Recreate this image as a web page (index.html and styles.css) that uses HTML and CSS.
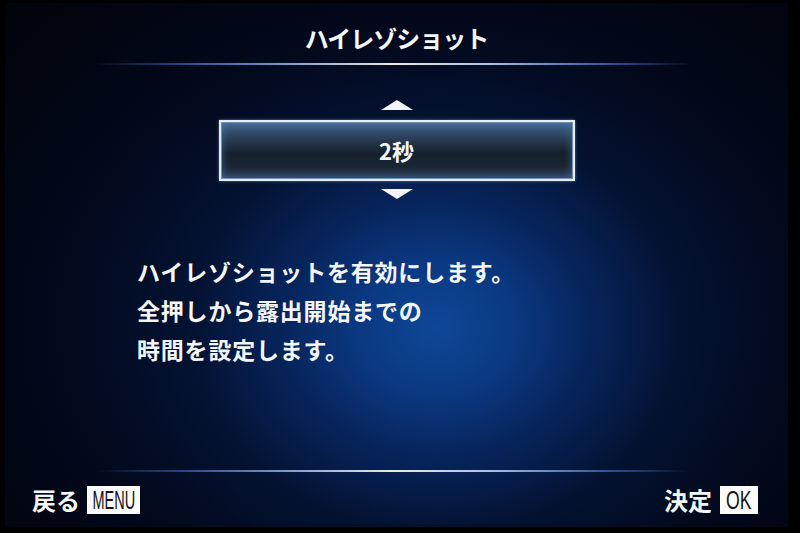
FILE: index.html
```html
<!DOCTYPE html>
<html lang="ja">
<head>
    <meta charset="UTF-8">
    <meta name="viewport" content="width=device-width, initial-scale=1.0">
    <title>ハイレゾショット</title>
    <link rel="stylesheet" href="styles.css">
</head>
<body>
    <div class="screen">
        <div class="title">ハイレゾショット</div>
        <div class="rule"></div>

        <div class="main">
            <div class="picker">
                <div class="arrow arrow-up"></div>
                <div class="value-box">2秒</div>
                <div class="arrow arrow-down"></div>
            </div>

            <div class="desc">
                <p>ハイレゾショットを有効にします。</p>
                <p>全押しから露出開始までの</p>
                <p>時間を設定します。</p>
            </div>
        </div>

        <div class="rule rule-bottom"></div>
        <div class="footer">
            <div class="hint">戻る<span class="key key-menu"><span class="narrow">MENU</span></span></div>
            <div class="hint">決定<span class="key key-ok"><span class="narrow">OK</span></span></div>
        </div>
    </div>
</body>
</html>
```

FILE: styles.css
```css
body {
    margin: 0;
    padding: 0;
    width: 800px;
    height: 533px;
    background-color: #000;
    font-family: "Noto Sans CJK JP", "Noto Sans", sans-serif;
    color: #f4f6f8;
    overflow: hidden;
}

/* the LCD panel itself, inside a black bezel */
.screen {
    margin: 3px 0 0 5px;
    width: 783px;
    height: 524px;
    display: flex;
    flex-direction: column;
    box-sizing: border-box;
    padding-bottom: 13px;
    overflow: hidden;
    background:
        radial-gradient(ellipse 310px 260px at 432px 325px, #0e4798 0%, #0b3982 25%, rgba(7, 40, 100, 0.78) 50%, rgba(4, 22, 56, 0.35) 78%, rgba(3, 10, 28, 0) 100%),
        radial-gradient(ellipse 560px 440px at 425px 320px, #061c46 0%, #041232 40%, #02081a 70%, #02040c 100%);
}

.title {
    padding-top: 21px;
    height: 28px;
    line-height: 28px;
    font-size: 24px;
    font-weight: 700;
    text-align: center;
    letter-spacing: -1px;
}

/* thin glowing divider under the title and above the footer */
.rule {
    height: 2px;
    margin: 11px 96px 0 89px;
    background: linear-gradient(to right,
        rgba(30, 70, 150, 0) 0%,
        #1f4688 14%,
        #7a9cd0 32%,
        #f2e8de 50%,
        #a9c2e8 66%,
        #2a55a0 86%,
        rgba(30, 70, 150, 0) 100%);
}

.rule-bottom {
    margin: 0 98px 0 91px;
}

.main {
    flex: 1;
}

.picker {
    display: flex;
    flex-direction: column;
    align-items: center;
    padding-top: 35px;
}

.arrow {
    width: 0;
    height: 0;
    border-left: 16px solid transparent;
    border-right: 16px solid transparent;
}

.arrow-up {
    border-bottom: 10px solid #f2f4f6;
}

.arrow-down {
    border-top: 10px solid #f2f4f6;
    margin-top: 8px;
}

.value-box {
    margin-top: 10px;
    width: 352px;
    height: 57px;
    border: 2px solid #e6edf4;
    box-shadow:
        0 0 3px rgba(140, 180, 230, 0.6),
        inset 0 0 0 1px #6d8fb8,
        inset 0 0 10px rgba(80, 130, 190, 0.7);
    background: linear-gradient(to bottom, #44668e 0%, #2a3f58 28%, #17202d 55%, #1a2533 78%, #2c4058 100%);
    text-align: center;
    line-height: 57px;
    font-size: 22px;
    font-weight: 700;
}

.desc {
    margin-top: 53px;
    padding-left: 132px;
    font-size: 23px;
    font-weight: 700;
    line-height: 39px;
    letter-spacing: 0.8px;
}

.desc p {
    margin: 0;
}

.footer {
    display: flex;
    justify-content: space-between;
    align-items: center;
    margin-top: 13px;
    padding: 0 30px 0 27px;
    height: 29px;
}

.hint {
    display: flex;
    align-items: center;
    font-size: 24px;
    font-weight: 700;
    line-height: 29px;
}

.key {
    display: flex;
    justify-content: center;
    align-items: center;
    margin-left: 7px;
    height: 28px;
    background-color: #fbfbfb;
    color: #141414;
    font-family: "Liberation Sans", "DejaVu Sans", sans-serif;
    font-size: 26px;
    font-weight: 400;
    overflow: hidden;
}

/* the button labels use a condensed face on the camera */
.narrow {
    display: inline-block;
    transform: scaleX(0.68);
    line-height: 28px;
}

.key-menu {
    width: 53px;
    font-size: 25px;
}

.key-menu .narrow {
    transform: scaleX(0.58);
}

.key-ok {
    width: 38px;
    margin-left: 8px;
}
```
